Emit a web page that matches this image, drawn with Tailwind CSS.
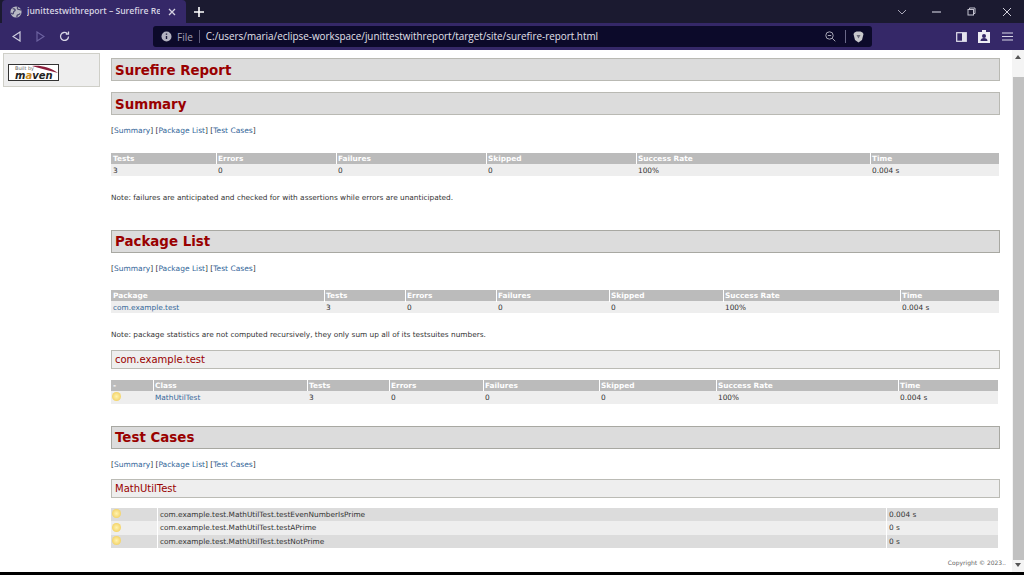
<!DOCTYPE html>
<html>
<head>
<meta charset="utf-8">
<script src="https://cdn.jsdelivr.net/npm/@tailwindcss/browser@4"></script>
</head>
<body class="m-0 w-[1024px] h-[575px] overflow-hidden bg-black font-['DejaVu_Sans',sans-serif]">
<div class="flex flex-col h-[572px] overflow-hidden">
  <!-- tab strip -->
  <div class="h-[23px] shrink-0 bg-[#1b1a30] flex items-center font-['Open_Sans',sans-serif]">
    <div class="ml-[2px] w-[184px] h-[23px] bg-[#352868] rounded-t-[4px] flex items-center pl-[8px] text-[#d6d3e2]">
      <svg class="w-[12px] h-[12px] shrink-0" viewBox="0 0 14 14"><circle cx="7" cy="7" r="6.500" fill="#b9b9c4"/><path d="M3 3c2 0 3 1 3 2s-2 1-2 3-2 1-3 0M9 1c-1 2 0 3 1 3s2 0 3 1M8 13c0-2 1-3 2-3s1-1 2-1" stroke="#4a4570" stroke-width="1.500" fill="none"/></svg>
      <span class="ml-[5px] w-[133px] overflow-hidden whitespace-nowrap text-[8.600px] font-semibold leading-[23px]">junittestwithreport – Surefire Rep</span>
      <svg class="ml-[8px] w-[8px] h-[8px]" viewBox="0 0 8 8"><path d="M1 1l6 6M7 1l-6 6" stroke="#d6d3e2" stroke-width="1.300"/></svg>
    </div>
    <svg class="ml-[8px] w-[10px] h-[10px]" viewBox="0 0 10 10"><path d="M5 0v10M0 5h10" stroke="#fff" stroke-width="1.600"/></svg>
    <div class="ml-auto flex items-center">
      <svg class="w-[10px] h-[6px] mr-[25px]" viewBox="0 0 10 6"><path d="M1 1l4 4 4-4" stroke="#a8a6b8" stroke-width="1" fill="none"/></svg>
      <svg class="w-[9px] h-[2px] mr-[26px]" viewBox="0 0 9 2"><path d="M0 1h9" stroke="#c4c3d0" stroke-width="1.200"/></svg>
      <svg class="w-[9px] h-[9px] mr-[26px]" viewBox="0 0 9 9"><path d="M2.500 2.500V1h5.500v5.500H6.500" stroke="#c4c3d0" fill="none"/><rect x="1" y="2.500" width="5.500" height="5.500" stroke="#c4c3d0" fill="none"/></svg>
      <svg class="w-[10px] h-[10px] mr-[12px]" viewBox="0 0 10 10"><path d="M1 1l8 8M9 1l-8 8" stroke="#d0cfdb" stroke-width="1"/></svg>
    </div>
  </div>
  <!-- toolbar -->
  <div class="h-[27px] shrink-0 bg-[#352868] flex items-center font-['Open_Sans',sans-serif]">
    <svg class="ml-[12px] w-[9px] h-[11px]" viewBox="0 0 9 11"><path d="M8 1L1 5.500 8 10z" stroke="#cfcde0" stroke-width="1.200" fill="none"/></svg>
    <svg class="ml-[15px] w-[9px] h-[11px]" viewBox="0 0 9 11"><path d="M1 1l7 4.500L1 10z" stroke="#6c62a0" stroke-width="1.200" fill="none"/></svg>
    <svg class="ml-[14px] w-[11px] h-[11px]" viewBox="0 0 11 11"><path d="M9.500 5.500a4 4 0 1 1-1.300-3M9.500 .5v2.700H6.800" stroke="#d8d6e6" stroke-width="1.300" fill="none"/></svg>
    <div class="ml-[83px] w-[719px] h-[21px] bg-[#0c0a2a] rounded-[3px] flex items-center pl-[8px] pr-[8px]">
      <svg class="w-[11px] h-[11px] shrink-0" viewBox="0 0 11 11"><circle cx="5.500" cy="5.500" r="5" fill="#b4b3c0"/><path d="M5.500 5v3M5.500 2.500v1.200" stroke="#1a1838" stroke-width="1.400"/></svg>
      <span class="ml-[5px] text-[10px] text-[#a5a3b5] leading-none">File</span>
      <span class="ml-[6px] w-px h-[13px] bg-[#5a5878]"></span>
      <span class="ml-[6px] text-[9.900px] text-[#e2e1ea] whitespace-nowrap leading-none">C:/users/maria/eclipse-workspace/junittestwithreport/target/site/surefire-report.html</span>
      <svg class="ml-auto w-[11px] h-[11px]" viewBox="0 0 11 11"><circle cx="4.500" cy="4.500" r="3.700" stroke="#a8a7b6" fill="none"/><path d="M7.300 7.300l3 3M2.800 4.500h3.400" stroke="#a8a7b6"/></svg>
      <span class="ml-[9px] w-px h-[13px] bg-[#6a6888]"></span>
      <svg class="ml-[7px] w-[11px] h-[12px]" viewBox="0 0 11 12"><path d="M1.500 1.500L3.500.5h4l2 1 1 1.500-1.500 6-3.500 2.500L2 9 .5 3z" fill="#c8c8cc"/><path d="M3.500 4h4L5.500 7.500z" fill="#6a6a78"/></svg>
    </div>
    <svg class="ml-[84px] w-[11px] h-[10px]" viewBox="0 0 11 10"><rect x=".7" y=".7" width="9.600" height="8.600" stroke="#e4e3ee" stroke-width="1.200" fill="none"/><rect x="6" y="1" width="4" height="8" fill="#e4e3ee"/></svg>
    <svg class="ml-[11px] w-[12px] h-[13px]" viewBox="0 0 12 13"><path d="M0 2h4V0h4v2h4v11H0z" fill="#eeedf4"/><circle cx="6" cy="6" r="2" fill="#352868"/><path d="M2.500 11c0-2 1.500-3 3.500-3s3.500 1 3.500 3z" fill="#352868"/></svg>
    <svg class="ml-[12px] w-[11px] h-[9px]" viewBox="0 0 11 9"><path d="M0 1h11M0 4.500h11M0 8h11" stroke="#d8d6e6" stroke-width="1.100"/></svg>
  </div>
  <!-- page -->
  <div class="flex-1 min-h-0 bg-white flex">
    <div class="w-[1012px] shrink-0 flex items-start text-[7.360px] leading-[11px] text-[#333]">
      <!-- sidebar -->
      <div class="ml-[3px] mt-[3px] w-[97px] h-[34px] shrink-0 bg-[#eeeeee] border border-[#cfcfc8] pl-[4px] pt-[10px]">
        <div class="w-[51px] h-[17px] bg-white border border-[#333] relative overflow-hidden font-['DejaVu_Sans',sans-serif]">
          <span class="absolute left-[6px] top-0 text-[5px] leading-[6px] text-[#666] whitespace-nowrap">Built by</span>
          <svg class="absolute right-0 top-0 w-[26px] h-[9px]" viewBox="0 0 26 9"><path d="M0 1c8-1 18 1 26 7C17 6 8 3 0 1z" fill="#8a1e3c"/></svg>
          <span class="absolute left-[6px] top-[5px] text-[10px] leading-[11px] font-bold italic text-[#222] whitespace-nowrap">m<span class="text-[#c98a1e]">a</span>ven</span>
        </div>
      </div>
      <!-- main -->
      <div class="ml-[11px] w-[889px] shrink-0 pt-[8px]">
        <h2 class="h-[23px] bg-[#dcdcdc] border border-[#b9b9b3] pl-[3px] text-[13.400px] leading-[23px] font-bold text-[#990000]">Surefire Report</h2>
        <h2 class="mt-[11px] h-[23px] bg-[#dcdcdc] border border-[#b9b9b3] pl-[3px] text-[13.400px] leading-[23px] font-bold text-[#990000]">Summary</h2>
        <p class="mt-[10px] h-[11px] whitespace-nowrap text-[7.500px]">[<a class="text-[#369]">Summary</a>] [<a class="text-[#369]">Package List</a>] [<a class="text-[#369]">Test Cases</a>]</p>

        <div class="mt-[17px] w-[888px]">
          <div class="grid grid-cols-[105px_120px_150px_150px_234px_1fr] h-[11px] bg-[#bbbbbb] text-white font-bold">
            <span class="pl-[2px]">Tests</span><span class="pl-[1px] border-l border-white">Errors</span><span class="pl-[1px] border-l border-white">Failures</span><span class="pl-[1px] border-l border-white">Skipped</span><span class="pl-[1px] border-l border-white">Success Rate</span><span class="pl-[1px] border-l border-white">Time</span>
          </div>
          <div class="grid grid-cols-[105px_120px_150px_150px_234px_1fr] h-[12px] bg-[#eeeeee] leading-[13px]">
            <span class="pl-[2px]">3</span><span class="pl-[2px]">0</span><span class="pl-[2px]">0</span><span class="pl-[2px]">0</span><span class="pl-[2px]">100%</span><span class="pl-[2px]">0.004 s</span>
          </div>
        </div>
        <p class="mt-[16px] h-[11px] whitespace-nowrap">Note: failures are anticipated and checked for with assertions while errors are unanticipated.</p>

        <h2 class="mt-[27px] h-[23px] bg-[#dcdcdc] border border-[#a8a8a2] pl-[3px] text-[13.400px] leading-[22px] font-bold text-[#990000]">Package List</h2>
        <p class="mt-[10px] h-[11px] whitespace-nowrap text-[7.500px]">[<a class="text-[#369]">Summary</a>] [<a class="text-[#369]">Package List</a>] [<a class="text-[#369]">Test Cases</a>]</p>

        <div class="mt-[16px] w-[888px]">
          <div class="grid grid-cols-[213px_81px_91px_113px_114px_177px_1fr] h-[11px] bg-[#bbbbbb] text-white font-bold leading-[12px]">
            <span class="pl-[2px]">Package</span><span class="pl-[1px] border-l border-white">Tests</span><span class="pl-[1px] border-l border-white">Errors</span><span class="pl-[1px] border-l border-white">Failures</span><span class="pl-[1px] border-l border-white">Skipped</span><span class="pl-[1px] border-l border-white">Success Rate</span><span class="pl-[1px] border-l border-white">Time</span>
          </div>
          <div class="grid grid-cols-[213px_81px_91px_113px_114px_177px_1fr] h-[12px] bg-[#eeeeee] leading-[13px]">
            <a class="pl-[2px] text-[#369]">com.example.test</a><span class="pl-[2px]">3</span><span class="pl-[2px]">0</span><span class="pl-[2px]">0</span><span class="pl-[2px]">0</span><span class="pl-[2px]">100%</span><span class="pl-[2px]">0.004 s</span>
          </div>
        </div>
        <p class="mt-[16px] h-[11px] whitespace-nowrap">Note: package statistics are not computed recursively, they only sum up all of its testsuites numbers.</p>

        <h3 class="mt-[10px] h-[19px] bg-[#eeeeee] border border-[#bbbbb5] pl-[3px] text-[10px] leading-[17px] font-normal text-[#990000]">com.example.test</h3>

        <div class="mt-[11px] w-[887px]">
          <div class="grid grid-cols-[42px_154px_82px_94px_116px_117px_182px_1fr] h-[11px] bg-[#bbbbbb] text-white font-bold">
            <span class="pl-[2px]">-</span><span class="pl-[1px] border-l border-white">Class</span><span class="pl-[1px] border-l border-white">Tests</span><span class="pl-[1px] border-l border-white">Errors</span><span class="pl-[1px] border-l border-white">Failures</span><span class="pl-[1px] border-l border-white">Skipped</span><span class="pl-[1px] border-l border-white">Success Rate</span><span class="pl-[1px] border-l border-white">Time</span>
          </div>
          <div class="grid grid-cols-[42px_154px_82px_94px_116px_117px_182px_1fr] h-[13px] bg-[#eeeeee] leading-[13px]">
            <span class="pl-[1px] pb-[2px] flex items-center"><span class="w-[9px] h-[9px] rounded-full bg-radial from-[#fff3b0] to-[#efc740]"></span></span><a class="pl-[2px] text-[#369]">MathUtilTest</a><span class="pl-[2px]">3</span><span class="pl-[2px]">0</span><span class="pl-[2px]">0</span><span class="pl-[2px]">0</span><span class="pl-[2px]">100%</span><span class="pl-[2px]">0.004 s</span>
          </div>
        </div>

        <h2 class="mt-[22px] h-[23px] bg-[#dcdcdc] border border-[#a8a8a2] pl-[3px] text-[13.400px] leading-[22px] font-bold text-[#990000]">Test Cases</h2>
        <p class="mt-[10px] h-[11px] whitespace-nowrap text-[7.500px]">[<a class="text-[#369]">Summary</a>] [<a class="text-[#369]">Package List</a>] [<a class="text-[#369]">Test Cases</a>]</p>

        <h3 class="mt-[9px] h-[19px] bg-[#eeeeee] border border-[#bbbbb5] pl-[3px] text-[10px] leading-[17px] font-normal text-[#990000]">MathUtilTest</h3>

        <div class="mt-[10px] w-[887px] leading-[13px]">
          <div class="grid grid-cols-[46px_729px_1fr] h-[13px] bg-[#dcdcdc]">
            <span class="pl-[1px] pb-[2px] flex items-center"><span class="w-[9px] h-[9px] rounded-full bg-radial from-[#fff3b0] to-[#efc740]"></span></span><span class="pl-[2px] border-l border-white">com.example.test.MathUtilTest.testEvenNumberIsPrime</span><span class="pl-[2px] border-l border-white">0.004 s</span>
          </div>
          <div class="grid grid-cols-[46px_729px_1fr] h-[14px] bg-[#eeeeee]">
            <span class="pl-[1px] pb-[2px] flex items-center"><span class="w-[9px] h-[9px] rounded-full bg-radial from-[#fff3b0] to-[#efc740]"></span></span><span class="pl-[2px] border-l border-white">com.example.test.MathUtilTest.testAPrime</span><span class="pl-[2px] border-l border-white">0 s</span>
          </div>
          <div class="grid grid-cols-[46px_729px_1fr] h-[13px] bg-[#dcdcdc]">
            <span class="pl-[1px] pb-[2px] flex items-center"><span class="w-[9px] h-[9px] rounded-full bg-radial from-[#fff3b0] to-[#efc740]"></span></span><span class="pl-[2px] border-l border-white">com.example.test.MathUtilTest.testNotPrime</span><span class="pl-[2px] border-l border-white">0 s</span>
          </div>
        </div>
        <p class="mt-[9px] -mr-[6px] text-right text-[6px] text-[#666] h-[11px] whitespace-nowrap">Copyright © 2023..</p>
      </div>
    </div>
    <!-- scrollbar -->
    <div class="w-[12px] shrink-0 bg-[#f4f4f4] flex flex-col items-center">
      <svg class="mt-[5px] w-[6px] h-[4px] shrink-0" viewBox="0 0 6 4"><path d="M3 0l3 4H0z" fill="#555"/></svg>
      <div class="mt-[18px] w-[11px] h-[483px] shrink-0 bg-[#c1c1c1]"></div>
      <svg class="mt-auto mb-[5px] w-[6px] h-[4px] shrink-0" viewBox="0 0 6 4"><path d="M0 0h6L3 4z" fill="#555"/></svg>
    </div>
  </div>
</div>
</body>
</html>
